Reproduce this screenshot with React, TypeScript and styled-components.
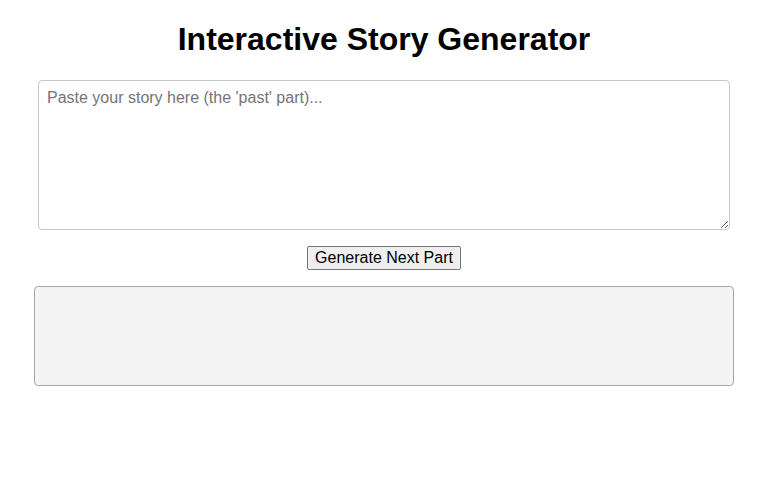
import React, { useState } from "react";
import styled, { createGlobalStyle } from "styled-components";

const Global = createGlobalStyle`
  html, body { margin: 0; padding: 0; background: #fff; }
  body { font-family: "Liberation Sans", Arial, sans-serif; color: #000; }
`;

const Page = styled.div`
  display: flex;
  flex-direction: column;
  align-items: center;
`;

const Title = styled.h1`
  font-size: 32px;
  font-weight: bold;
  margin: 21.44px 0;
  text-align: center;
`;

const StoryInput = styled.textarea`
  box-sizing: border-box;
  width: 692px;
  height: 150px;
  padding: 8px;
  border: 1px solid #c8c8c8;
  border-radius: 4px;
  font-family: "Liberation Sans", Arial, sans-serif;
  font-size: 16px;
  resize: vertical;
  display: block;
  &::placeholder { color: #757575; }
`;

const GenerateButton = styled.button`
  margin-top: 16px;
  box-sizing: border-box;
  height: 24px;
  padding: 1px 7px;
  font-family: "Liberation Sans", Arial, sans-serif;
  font-size: 16px;
  color: #000;
  background: #efefef;
  border: 1px solid #767676;
  border-radius: 2px;
`;

const Output = styled.div`
  box-sizing: border-box;
  margin-top: 16px;
  width: 700px;
  height: 100px;
  background: #f4f4f4;
  border: 1px solid #a8a8a8;
  border-radius: 4px;
  padding: 10px;
`;

export default function App() {
  const [story, setStory] = useState("");
  return (
    <Page>
      <Global />
      <Title>Interactive Story Generator</Title>
      <StoryInput
        value={story}
        onChange={(e) => setStory(e.target.value)}
        placeholder="Paste your story here (the 'past' part)..."
      />
      <GenerateButton>Generate Next Part</GenerateButton>
      <Output />
    </Page>
  );
}
